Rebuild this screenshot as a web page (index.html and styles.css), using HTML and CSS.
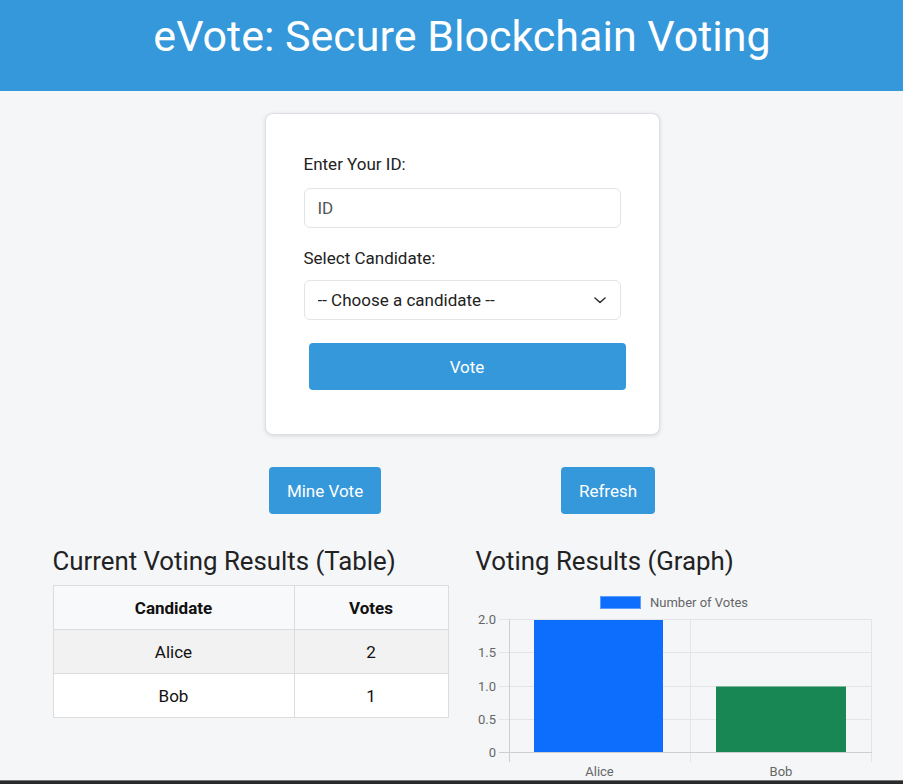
FILE: index.html
```html
<!DOCTYPE html>
<html lang="en">
<head>
<meta charset="utf-8">
<title>eVote</title>
<link rel="stylesheet" href="styles.css">
</head>
<body>
<div class="page">
  <header class="topbar">
    <h1 class="title">eVote: Secure Blockchain Voting</h1>
  </header>
  <main class="main">
    <form class="card">
      <label class="label" for="voterId">Enter Your ID:</label>
      <input class="field" id="voterId" type="text" placeholder="ID">
      <label class="label label-2" for="cand">Select Candidate:</label>
      <div class="select-wrap">
        <select class="field select" id="cand">
          <option>-- Choose a candidate --</option>
          <option>Alice</option>
          <option>Bob</option>
        </select>
        <svg class="chev" width="12" height="7" viewBox="0 0 12 7"><path d="M1 1 L6 5.5 L11 1" fill="none" stroke="#333" stroke-width="1.6" stroke-linecap="round" stroke-linejoin="round"/></svg>
      </div>
      <button class="btn btn-vote" type="button">Vote</button>
    </form>

    <div class="actions">
      <button class="btn btn-small" type="button">Mine Vote</button>
      <button class="btn btn-small" type="button">Refresh</button>
    </div>

    <section class="results">
      <div class="col">
        <h2 class="sub">Current Voting Results (Table)</h2>
        <table class="tbl">
          <thead>
            <tr><th class="c1">Candidate</th><th>Votes</th></tr>
          </thead>
          <tbody>
            <tr class="odd"><td>Alice</td><td>2</td></tr>
            <tr><td>Bob</td><td>1</td></tr>
          </tbody>
        </table>
      </div>
      <div class="col">
        <h2 class="sub">Voting Results (Graph)</h2>
        <div class="chart">
          <svg width="396" height="198" viewBox="0 0 396 198" font-family="Roboto, 'Liberation Sans', sans-serif" font-size="13">
            <rect x="124.5" y="8.5" width="40" height="12" fill="#0d6efd" stroke="#5b9cff" stroke-width="1"/>
            <text x="174" y="19">Number of Votes</text>
            <g stroke="#e5e5e5" stroke-width="1">
              <line x1="23" y1="31.5" x2="396" y2="31.5"/>
              <line x1="23" y1="64.5" x2="396" y2="64.5"/>
              <line x1="23" y1="98.5" x2="396" y2="98.5"/>
              <line x1="23" y1="131.5" x2="396" y2="131.5"/>
              <line x1="214.5" y1="31" x2="214.5" y2="174"/>
              <line x1="395.5" y1="31" x2="395.5" y2="174"/>
            </g>
            <rect x="58" y="32" width="129" height="132" fill="#0d6efd"/>
            <rect x="240" y="98.5" width="130" height="65.5" fill="#198754"/>
            <g stroke="#cfcfcf" stroke-width="1">
              <line x1="23" y1="164.5" x2="396" y2="164.5"/>
              <line x1="33.5" y1="31" x2="33.5" y2="174"/>
            </g>
            <g fill="#666" text-anchor="end">
              <text x="20" y="35.5">2.0</text>
              <text x="20" y="69">1.5</text>
              <text x="20" y="102.5">1.0</text>
              <text x="20" y="135.5">0.5</text>
              <text x="20" y="169">0</text>
            </g>
            <g fill="#666" text-anchor="middle">
              <text x="123.5" y="187.5">Alice</text>
              <text x="305" y="187.5">Bob</text>
            </g>
          </svg>
        </div>
      </div>
    </section>
  </main>
</div>
<div class="bottom-edge"></div>
</body>
</html>
```

FILE: styles.css
```css
html, body {
  margin: 0;
  padding: 0;
  overflow: hidden;
  background: #f4f6f8;
}
body {
  font-family: Roboto, "Liberation Sans", Arial, sans-serif;
  color: #222;
  font-size: 17px;
}
.page {
  width: 924px;
}
.topbar {
  background: #3498db;
  height: 91px;
  box-sizing: border-box;
  padding-top: 10px;
}
.title {
  margin: 0;
  text-align: center;
  color: #fff;
  font-weight: 400;
  font-size: 43px;
  line-height: 52px;
}
.main {
  display: flex;
  flex-direction: column;
  align-items: center;
  padding-top: 22px;
}
.card {
  width: 395px;
  box-sizing: border-box;
  background: #fff;
  border: 1px solid #dcdfe3;
  border-radius: 8px;
  box-shadow: 0 1px 4px rgba(0,0,0,0.12);
  padding: 38px 38px 44px 38px;
  display: flex;
  flex-direction: column;
}
.label {
  display: block;
  font-size: 17px;
  line-height: 24px;
  color: #222;
  margin-bottom: 12px;
}
.label-2 {
  margin-top: 18px;
  margin-bottom: 10px;
}
.field {
  width: 317px;
  height: 40px;
  box-sizing: border-box;
  border: 1px solid #e2e4e7;
  border-radius: 6px;
  background: #fff;
  font-family: Roboto, "Liberation Sans", Arial, sans-serif;
  font-size: 17px;
  color: #222;
  padding: 0 13px;
  margin: 0;
  outline: none;
}
.field::placeholder {
  color: #555;
}
.select-wrap {
  position: relative;
  width: 317px;
}
.select {
  appearance: none;
  -webkit-appearance: none;
  display: block;
}
.chev {
  position: absolute;
  right: 15px;
  top: 17px;
  pointer-events: none;
}
.btn {
  background: #3498db;
  color: #fff;
  border: none;
  border-radius: 4px;
  font-family: Roboto, "Liberation Sans", Arial, sans-serif;
  font-size: 17px;
  cursor: pointer;
}
.btn-vote {
  margin-top: 23px;
  margin-left: 5px;
  width: 317px;
  height: 47px;
}
.actions {
  margin-top: 32px;
  width: 566px;
  display: flex;
  justify-content: space-around;
}
.btn-small {
  height: 47px;
  padding: 0 18px;
}
.results {
  margin-top: 31px;
  display: flex;
  gap: 27px;
  width: 819px;
}
.col {
  width: 396px;
}
.sub {
  margin: 0;
  font-size: 25.8px;
  font-weight: 400;
  line-height: 32px;
  color: #222;
}
.tbl {
  margin-top: 8px;
  width: 396px;
  border-collapse: collapse;
  background: #fff;
  font-size: 17px;
}
.tbl th, .tbl td {
  border: 1px solid #dcdcdc;
  height: 43px;
  padding: 0;
  text-align: center;
  color: #111;
}
.tbl th {
  background: #f8f9fa;
  font-weight: 700;
}
.tbl .c1 {
  width: 240px;
}
.tbl tr.odd td {
  background: #f2f2f2;
}
.chart {
  margin-top: 11px;
  height: 198px;
}
.chart svg {
  display: block;
}
.chart svg > text {
  fill: #666;
}
.bottom-edge {
  position: fixed;
  left: 0;
  right: 0;
  bottom: 0;
  height: 3px;
  background: #2a2a2a;
  border-top: 1px solid #777;
}
```
